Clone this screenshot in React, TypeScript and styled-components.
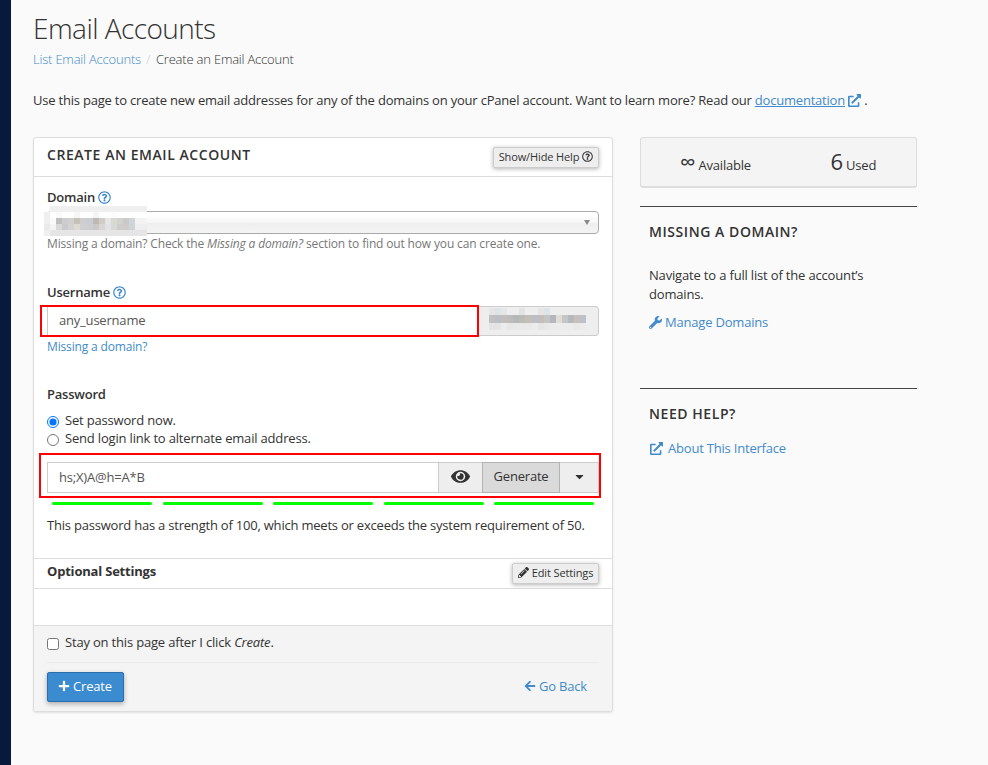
import React from "react";
import styled, { createGlobalStyle, css } from "styled-components";
import {
  FaArrowLeft,
  FaCaretDown,
  FaExternalLinkAlt,
  FaEye,
  FaPencilAlt,
  FaPlus,
  FaRegQuestionCircle,
  FaWrench,
} from "react-icons/fa";

const GlobalStyle = createGlobalStyle`
  * { box-sizing: border-box; }
  body {
    margin: 0;
    background: #fafafa;
    color: #333;
    font: 400 13px/19px "Open Sans", "Noto Sans", sans-serif;
    letter-spacing: -0.2px;
  }
  input, button { font: inherit; letter-spacing: inherit; }
  svg { display: block; flex: none; }
`;

const Shell = styled.div`
  display: flex;
  height: 765px;
  overflow: hidden;
`;

const NavEdge = styled.div`
  width: 11px;
  flex: none;
  background: #08193e;
`;

const Main = styled.main`
  flex: 1;
  padding: 9px 71px 0 22px;
`;

const PageTitle = styled.h1`
  margin: 0;
  height: 41px;
  font-size: 28px;
  line-height: 38px;
  font-weight: 300;
  letter-spacing: -0.55px;
`;

const Breadcrumb = styled.nav`
  display: flex;
  height: 19px;
  font-weight: 300;
  color: #333;
`;

const Slash = styled.span`
  width: 15px;
  padding-left: 5px;
  color: #ccc;
`;

const Link = styled.a<{ $underline?: boolean; $gap?: number }>`
  display: inline-flex;
  align-items: center;
  gap: ${(p) => p.$gap ?? 3}px;
  color: #428bca;
  text-decoration: ${(p) => (p.$underline ? "underline" : "none")};
`;

const Intro = styled.p`
  display: flex;
  margin: 22px 0 27px;
  white-space: pre;
  letter-spacing: -0.205px;
`;

const Columns = styled.div`
  display: grid;
  grid-template-columns: 580px 277px;
  column-gap: 27px;
  align-items: start;
`;

const Card = styled.section`
  height: 575px;
  border: 1px solid #ddd;
  border-radius: 3px;
  background: #fff;
  box-shadow: 0 1px 2px rgba(0, 0, 0, 0.1);
`;

const CardHeader = styled.header`
  display: flex;
  justify-content: space-between;
  height: 39px;
  padding: 8px 13px 0;
  border-bottom: 1px solid #ddd;
`;

const Heading = styled.h2`
  margin: 0;
  font-size: 14px;
  line-height: 18px;
  font-weight: 600;
  letter-spacing: 0.56px;
  text-transform: uppercase;
`;

const SmallButton = styled.button<{ $width: number }>`
  display: flex;
  align-items: center;
  justify-content: center;
  gap: 3px;
  width: ${(p) => p.$width}px;
  height: 21px;
  margin-top: ${(p) => (p.$width > 100 ? 1 : 0)}px;
  padding: 0 0 2px;
  border: 1px solid #ccc;
  border-radius: 2px;
  background: #eee;
  color: #333;
  font-size: 11px;
  line-height: 17px;
  letter-spacing: -0.13px;
  white-space: nowrap;
  box-shadow: 0 1px 4px rgba(0, 0, 0, 0.3);
`;

const CardBody = styled.div`
  height: 381px;
  padding: 11px 13px 0;
`;

const Label = styled.div`
  display: flex;
  align-items: center;
  gap: 3px;
  height: 19px;
  font-weight: 600;
  letter-spacing: -0.22px;

  svg { color: #428bca; }
`;

const Field = styled.div<{ $height: number }>`
  height: ${(p) => p.$height}px;
`;

const Select = styled.div`
  position: relative;
  display: flex;
  align-items: center;
  justify-content: flex-end;
  height: 23px;
  margin-top: 4px;
  padding-right: 8px;
  border: 1px solid #aaa;
  border-radius: 4px;
  background: linear-gradient(#fff 10%, #f6f6f6 50%, #eee 52%, #f4f4f4 100%);
`;

const Triangle = styled.span`
  border: 3px solid transparent;
  border-top: 5px solid #888;
  border-bottom: 0;
`;

const Mosaic = styled.div<{ $columns: number; $left: number; $top: number }>`
  position: absolute;
  left: ${(p) => p.$left}px;
  top: ${(p) => p.$top}px;
  display: grid;
  grid-template-columns: repeat(${(p) => p.$columns}, 6.08px);
`;

const Pixel = styled.i<{ $h: number }>`
  height: ${(p) => p.$h}px;
`;

const Hint = styled.p<{ $gap?: number }>`
  margin: ${(p) => p.$gap ?? 1}px 0 0;
  font-size: 12px;
  line-height: 18px;
  letter-spacing: -0.155px;
  color: #777;
`;

const InputRow = styled.div<{ $top: number; $height: number }>`
  position: relative;
  display: flex;
  height: ${(p) => p.$height}px;
  margin-top: ${(p) => p.$top}px;
`;

const TextInput = styled.input<{ $lift?: number }>`
  flex: 1;
  min-width: 0;
  padding: 0 11px ${(p) => p.$lift ?? 0}px;
  border: 1px solid #ccc;
  background: #fff;
  color: #555;
  outline: none;
`;

const Addon = styled.div`
  position: relative;
  width: 121px;
  border: 1px solid #ccc;
  border-left: 0;
  border-radius: 0 4px 4px 0;
  background: #eee;
`;

const Marker = styled.div<{ $box: [number, number, number, number] }>`
  position: absolute;
  z-index: 2;
  border: 2px solid #f00;
  pointer-events: none;
  ${({ $box: [x, y, w, h] }) => css`
    left: ${x}px;
    top: ${y}px;
    width: ${w}px;
    height: ${h}px;
  `}
`;

const ChoiceRow = styled.label`
  display: flex;
  align-items: center;
  gap: 6px;
  height: 18px;
  line-height: 17px;
  padding-bottom: 1px;
  letter-spacing: -0.18px;

  input {
    flex: none;
    width: 12px;
    height: 12px;
    margin: 3px 0 0;
    accent-color: #0075ff;
  }
`;

const Choices = styled.div`
  margin-top: 8px;
`;

const GroupButton = styled.button<{ $width: number; $active?: boolean }>`
  display: flex;
  align-items: center;
  justify-content: center;
  width: ${(p) => p.$width}px;
  padding: 0 0 2px;
  border: 1px solid ${(p) => (p.$active ? "#b3b3b3" : "#ccc")};
  margin-left: -1px;
  background: ${(p) => (p.$active ? "#dadada" : "#eee")};
  color: #333;
  z-index: ${(p) => (p.$active ? 1 : 0)};
`;

const Strength = styled.div`
  display: flex;
  justify-content: space-between;
  margin: 9px 5px 11px;

  span {
    width: 100px;
    height: 3px;
    border-radius: 2px;
    background: #0f0;
  }
`;

const StrengthText = styled.div`
  white-space: nowrap;
  letter-spacing: -0.21px;
`;

const OptionalBar = styled.div`
  display: flex;
  justify-content: space-between;
  height: 31px;
  padding: 4px 13px 0;
  border: solid #ddd;
  border-width: 1px 0;
  line-height: 16px;
  font-weight: 700;

  button { font-weight: 400; }
`;

const Spacer = styled.div`
  height: 36px;
`;

const CardFooter = styled.footer`
  height: 86px;
  padding: 8px 13px 0;
  border-top: 1px solid #ddd;
  border-radius: 0 0 3px 3px;
  background: #f4f4f4;
`;

const Actions = styled.div`
  display: flex;
  align-items: center;
  justify-content: space-between;
  margin-top: 10px;
  padding: 9px 12px 0 0;
  border-top: 1px solid #eaeaea;

  a { margin-bottom: 2px; }
`;

const PrimaryButton = styled.button`
  display: flex;
  align-items: center;
  justify-content: center;
  gap: 3px;
  width: 77px;
  height: 30px;
  padding: 0 1px 2px 0;
  border: 1px solid #2a6ead;
  border-radius: 2px;
  background: #3a8bd0;
  color: #fff;
  box-shadow: 0 2px 5px rgba(0, 0, 0, 0.3);
`;

const Stats = styled.div`
  display: grid;
  grid-template-columns: 1fr 1fr;
  height: 51px;
  margin-bottom: 18px;
  padding-top: 10px;
  border: 1px solid #ddd;
  border-bottom-width: 2px;
  border-radius: 3px;
  background: #f4f4f4;
`;

const Stat = styled.div<{ $shift: number }>`
  padding-left: ${(p) => p.$shift}px;
  line-height: 26px;
  white-space: nowrap;

  b { font-size: 22px; font-weight: 400; }
`;

const SidePanel = styled.section<{ $height: number }>`
  height: ${(p) => p.$height}px;
  padding: 16px 10px 0 9px;
  border-top: 1px solid #444;

  p { margin: 25px 0 9px; letter-spacing: -0.17px; }
`;

const HelpLink = styled(Link)`
  margin-top: 16px;
  padding-left: 1px;
`;

const BLANK = "transparent";
const DOMAIN_ROWS = [
  { h: 6, colors: [BLANK, ...Array(16).fill("#efefef")] },
  { h: 6, colors: ["#efefef", "#fff", "#f9f9f9", "#fff", "#fff", "#f6f6f6", "#fff", "#fff", "#f4f4f4", "#fff", "#fff", "#fbfbfb", "#fff", "#fff", "#fff", "#fff", "#fff"] },
  { h: 6, colors: ["#efefef", "#fafafa", "#bfbfbf", "#cfcdcd", "#d0d0d0", "#c6c1b7", "#cecece", "#c8ccd3", "#bdb8b5", "#d0cbc5", "#e4e5e7", "#d9d9d4", "#d2d3cf", "#cacaca", "#ced6dc", "#f3f3f3", "#f3f3f3"] },
  { h: 6, colors: ["#eaeaea", "#f4f4f4", "#d9d9d9", "#cacaca", "#d2d2d2", "#dddad4", "#cfcfcf", "#cdcdcf", "#cac9c9", "#d9d6d2", "#e0e2e5", "#d8d8d5", "#cdcdca", "#d0cbc7", "#cdd3d7", "#eeeeee", "#eeeeee"] },
  { h: 6, colors: ["#efefef", ...Array(16).fill("#e5e5e5")] },
];
const SUFFIX_ROWS = [
  { h: 7, colors: ["#e7e5e3", "#e0e3e6", "#e5e6e8", "#eee", "#eee", "#e2e3e5", "#eee", "#eee", "#e7e5e3", "#e0e3e5", "#eee", "#eee", "#eee", "#eee", "#eee", "#eee"] },
  { h: 8, colors: ["#c2c1c0", "#bbbec4", "#c3bebb", "#bdbdbd", "#b7b7b7", "#bbb", "#c4beb9", "#b9bec8", "#c3beb9", "#c4c4c4", "#b5b7ba", "#dfddda", "#c6c6c6", "#b5b8bc", "#c6c1bb", "#bcc1cb"] },
  { h: 7, colors: ["#e4e4e4", "#e4e4e4", "#ececec", "#e7e7e7", "#e9e9e9", "#e9e9e9", "#e9e9e9", "#ececec", "#e5e5e5", "#e8e8e8", "#ebebeb", "#ececec", "#ececec", "#ececec", "#e9e9e9", "#ececec"] },
];

type MosaicRow = { h: number; colors: string[] };

function Redacted({ rows, left, top }: { rows: MosaicRow[]; left: number; top: number }) {
  return (
    <Mosaic $columns={rows[0].colors.length} $left={left} $top={top}>
      {rows.flatMap((row, r) =>
        row.colors.map((color, c) => (
          <Pixel key={`${r}-${c}`} $h={row.h} style={{ background: color }} />
        ))
      )}
    </Mosaic>
  );
}

export default function App() {
  return (
    <Shell>
      <GlobalStyle />
      <NavEdge />
      <Main>
        <PageTitle>Email Accounts</PageTitle>
        <Breadcrumb>
          <Link>List Email Accounts</Link>
          <Slash>/</Slash>
          <span>Create an Email Account</span>
        </Breadcrumb>
        <Intro>
          {"Use this page to create new email addresses for any of the domains on your cPanel account. Want to learn more? Read our "}
          <Link $underline>{"documentation"}<FaExternalLinkAlt size={13} /></Link>
          {" ."}
        </Intro>
        <Columns>
          <Card>
            <CardHeader>
              <Heading>Create an Email Account</Heading>
              <SmallButton $width={106}>Show/Hide Help <FaRegQuestionCircle size={11} /></SmallButton>
            </CardHeader>
            <CardBody>
              <Field $height={95}>
                <Label>Domain <FaRegQuestionCircle size={13} /></Label>
                <Select>
                  <Triangle />
                  <Redacted rows={DOMAIN_ROWS} left={-4} top={-6} />
                </Select>
                <Hint>
                  Missing a domain? Check the <em>Missing a domain?</em> section to find out how you can create one.
                </Hint>
              </Field>
              <Field $height={102}>
                <Label>Username <FaRegQuestionCircle size={13} /></Label>
                <InputRow $top={4} $height={30}>
                  <TextInput $lift={2} defaultValue="any_username" />
                  <Addon>
                    <Redacted rows={SUFFIX_ROWS} left={11} top={1} />
                  </Addon>
                  <Marker $box={[-7, -1, 439, 32]} />
                </InputRow>
                <Hint $gap={2}><Link>Missing a domain?</Link></Hint>
              </Field>
              <Label>Password</Label>
              <Choices>
                <ChoiceRow>
                  <input type="radio" name="mode" defaultChecked />
                  Set password now.
                </ChoiceRow>
                <ChoiceRow>
                  <input type="radio" name="mode" />
                  Send login link to alternate email address.
                </ChoiceRow>
              </Choices>
              <InputRow $top={14} $height={31}>
                <TextInput defaultValue="hs;X)A@h=A*B" />
                <GroupButton $width={45}><FaEye size={19} /></GroupButton>
                <GroupButton $width={78} $active>Generate</GroupButton>
                <GroupButton $width={40}><FaCaretDown size={13} /></GroupButton>
                <Marker $box={[-8, -9, 562, 45]} />
              </InputRow>
              <Strength><span /><span /><span /><span /><span /></Strength>
              <StrengthText>This password has a strength of 100, which meets or exceeds the system requirement of 50.</StrengthText>
            </CardBody>
            <OptionalBar>
              Optional Settings
              <SmallButton $width={87}><FaPencilAlt size={11} /> Edit Settings</SmallButton>
            </OptionalBar>
            <Spacer />
            <CardFooter>
              <ChoiceRow>
                <input type="checkbox" />
                <span>Stay on this page after I click <em>Create</em>.</span>
              </ChoiceRow>
              <Actions>
                <PrimaryButton><FaPlus size={12} /> Create</PrimaryButton>
                <Link><FaArrowLeft size={12} /> Go Back</Link>
              </Actions>
            </CardFooter>
          </Card>
          <aside>
            <Stats>
              <Stat $shift={39}><b>∞</b> Available</Stat>
              <Stat $shift={52}><b>6</b> Used</Stat>
            </Stats>
            <SidePanel $height={182}>
              <Heading>Missing a Domain?</Heading>
              <p>Navigate to a full list of the account’s domains.</p>
              <Link><FaWrench size={13} /> Manage Domains</Link>
            </SidePanel>
            <SidePanel $height={100}>
              <Heading>Need Help?</Heading>
              <HelpLink $gap={5}><FaExternalLinkAlt size={13} /> About This Interface</HelpLink>
            </SidePanel>
          </aside>
        </Columns>
      </Main>
    </Shell>
  );
}
